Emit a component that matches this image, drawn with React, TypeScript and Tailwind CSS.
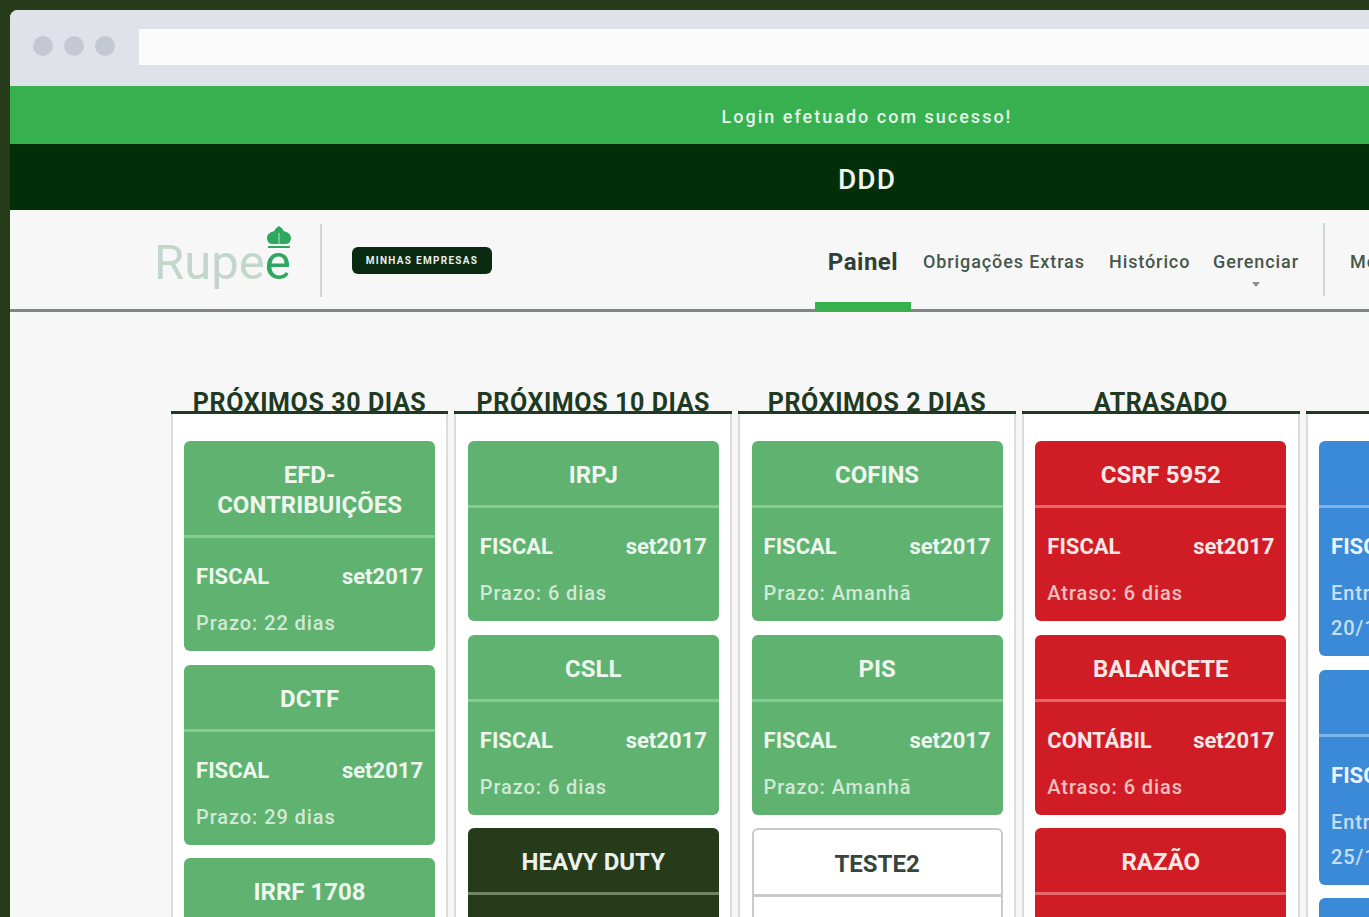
import React from "react";

type Tone = "green" | "red" | "blue" | "dark" | "white";

type Task = {
  title: string;
  dept: string;
  period: string;
  note: string;
};

const toneClasses: Record<Tone, { card: string; head: string }> = {
  green: { card: "bg-[#5fb270] text-[#edf7ee]", head: "border-[#85cb93]" },
  red: { card: "bg-[#d01c24] text-[#fbe6e6]", head: "border-[#e8676c]" },
  blue: { card: "bg-[#3a8ad8] text-[#eaf3fb]", head: "border-[#7fb4e8]" },
  dark: { card: "bg-[#263b19] text-[#eef0ea]", head: "border-[#6f8566]" },
  white: { card: "bg-white text-[#37463c] border-2 border-[#c9cbc9]", head: "border-[#c9cbc9]" },
};

const columns: { title: string; tone: Tone; tasks: (Task & { tone?: Tone })[] }[] = [
  {
    title: "PRÓXIMOS 30 DIAS",
    tone: "green",
    tasks: [
      { title: "EFD-CONTRIBUIÇÕES", dept: "FISCAL", period: "set2017", note: "Prazo: 22 dias" },
      { title: "DCTF", dept: "FISCAL", period: "set2017", note: "Prazo: 29 dias" },
      { title: "IRRF 1708", dept: "FISCAL", period: "set2017", note: "Prazo: 29 dias" },
    ],
  },
  {
    title: "PRÓXIMOS 10 DIAS",
    tone: "green",
    tasks: [
      { title: "IRPJ", dept: "FISCAL", period: "set2017", note: "Prazo: 6 dias" },
      { title: "CSLL", dept: "FISCAL", period: "set2017", note: "Prazo: 6 dias" },
      { title: "HEAVY DUTY", dept: "FISCAL", period: "set2017", note: "Prazo: 6 dias", tone: "dark" },
    ],
  },
  {
    title: "PRÓXIMOS 2 DIAS",
    tone: "green",
    tasks: [
      { title: "COFINS", dept: "FISCAL", period: "set2017", note: "Prazo: Amanhã" },
      { title: "PIS", dept: "FISCAL", period: "set2017", note: "Prazo: Amanhã" },
      { title: "TESTE2", dept: "FISCAL", period: "set2017", note: "Prazo: Amanhã", tone: "white" },
    ],
  },
  {
    title: "ATRASADO",
    tone: "red",
    tasks: [
      { title: "CSRF 5952", dept: "FISCAL", period: "set2017", note: "Atraso: 6 dias" },
      { title: "BALANCETE", dept: "CONTÁBIL", period: "set2017", note: "Atraso: 6 dias" },
      { title: "RAZÃO", dept: "CONTÁBIL", period: "set2017", note: "Atraso: 6 dias" },
    ],
  },
  {
    title: "ENTREGUE",
    tone: "blue",
    tasks: [
      { title: "ICMS", dept: "FISCAL", period: "set2017", note: "Entregue em: 20/10/2017" },
      { title: "ISS", dept: "FISCAL", period: "set2017", note: "Entregue em: 25/10/2017" },
      { title: "GPS", dept: "FISCAL", period: "set2017", note: "Entregue em: 25/10/2017" },
    ],
  },
];

function TaskCard({ task, tone }: { task: Task; tone: Tone }) {
  const styles = toneClasses[tone];
  return (
    <div className={`rounded-md overflow-hidden ${styles.card}`}>
      <div className={`px-3 pt-[19px] pb-[15px] text-center text-[24px] leading-[30px] font-bold border-b-[3px] ${styles.head}`}>
        {task.title}
      </div>
      <div className="px-3 pt-[27px] pb-[10px]">
        <div className="flex justify-between text-[22px] leading-[24px] font-bold">
          <span>{task.dept}</span>
          <span>{task.period}</span>
        </div>
        <div className="mt-[17px] text-[20px] leading-[35px] font-medium tracking-[0.900px] opacity-80 w-[190px]">
          {task.note}
        </div>
      </div>
    </div>
  );
}

function Logo() {
  return (
    <div className="flex items-baseline text-[49px] leading-none text-[#c3d6cc]">
      <span>Rupe</span>
      <span className="relative text-[#2fa85f]">
        e
        <svg viewBox="0 0 24 22" className="absolute -top-[12px] left-[2px] w-[24px] h-[22px]">
          {/* cloud badge over the last letter, split down the middle */}
          <path
            d="M12 0c2.500 1.500 4 3 4.800 5.200C20 5.600 24 8 24 12c0 3-2 6-5 6H5c-3 0-5-3-5-6 0-4 4-6.400 7.200-6.800C8 3 9.500 1.500 12 0z"
            fill="#2fa85f"
          />
          <path d="M12 7v11" stroke="#8fd0a6" strokeWidth="1.400" fill="none" />
          <rect x="1" y="20" width="22" height="2" fill="#2fa85f" />
        </svg>
      </span>
    </div>
  );
}

export default function App() {
  return (
    <div className="w-[1369px] h-[917px] overflow-hidden bg-[#263b19] pt-[10px] pl-[10px] font-['Roboto',sans-serif]">
      <div className="w-[1714px] h-[907px] rounded-tl-lg overflow-hidden bg-[#f7f7f7] flex flex-col">
        {/* Browser chrome */}
        <div className="h-[76px] shrink-0 bg-[#dfe2e8] flex items-start pt-[19px]">
          <div className="w-[129px] flex items-center gap-[11px] pl-[23px] pt-[7px]">
            <span className="w-[20px] h-[20px] rounded-full bg-[#c4c8d0]" />
            <span className="w-[20px] h-[20px] rounded-full bg-[#c4c8d0]" />
            <span className="w-[20px] h-[20px] rounded-full bg-[#c4c8d0]" />
          </div>
          <div className="flex-1 h-[36px] bg-[#fbfbfc]" />
        </div>

        {/* Flash message and company name */}
        <div className="h-[58px] shrink-0 bg-[#37b050] flex items-center justify-center pt-[3px] text-[#e6f5e8] text-[18px] font-medium tracking-[2px]">
          Login efetuado com sucesso!
        </div>
        <div className="h-[66px] shrink-0 bg-[#032f08] flex items-center justify-center pt-[5px] text-[#f0f3ee] text-[28px] font-medium tracking-[1px]">
          DDD
        </div>

        {/* Main nav */}
        <div className="h-[102px] shrink-0 border-b-[3px] border-[#7f8780] flex items-stretch pl-[144px]">
          <div className="w-[136px] flex items-center pt-[6px]">
            <Logo />
          </div>
          <div className="ml-[30px] mt-[14px] mb-[12px] w-[2px] bg-[#cfd6d0]" />
          <div className="ml-[30px] flex items-center pt-[2px]">
            <div className="w-[140px] h-[27px] rounded-md bg-[#0b2a12] text-[#e8efe8] text-[10px] font-bold tracking-[1.300px] flex items-center justify-center">
              MINHAS EMPRESAS
            </div>
          </div>
          <div className="ml-[323px] w-[96px] relative flex items-center justify-center text-[24px] font-bold tracking-[0.500px] text-[#2f4034] pt-[4px]">
            Painel
            <span className="absolute left-0 right-0 -bottom-[3px] h-[10px] bg-[#37b050]" />
          </div>
          <div className="flex items-center text-[18px] font-medium tracking-[0.900px] text-[#47574b] pt-[4px]">
            <span className="ml-[12px] w-[161px] whitespace-nowrap">Obrigações Extras</span>
            <span className="ml-[25px] w-[80px]">Histórico</span>
            <span className="ml-[24px] w-[87px] relative">
              Gerenciar
              <span className="absolute left-[39px] top-[34px] w-0 h-0 border-x-[4px] border-x-transparent border-t-[5px] border-t-[#8a938c]" />
            </span>
            <span className="ml-[23px] mb-[5px] w-[2px] h-[73px] bg-[#cfd6d0]" />
            <span className="ml-[25px] whitespace-nowrap">Meus dados</span>
          </div>
        </div>

        {/* Deadline board */}
        <div className="flex-1 flex gap-[6px] pl-[160.700px] pt-[78px] min-h-0">
          {columns.map((col) => (
            <div key={col.title} className="w-[277.750px] shrink-0 flex flex-col">
              <div className="h-[24px] border-b-[3px] border-[#1f3a22] text-center text-[25px] leading-[26px] font-bold tracking-[0.600px] text-[#1f3a22] whitespace-nowrap">
                {col.title}
              </div>
              <div className="flex-1 bg-white border-x-2 border-[#dcdedc] px-[11.400px] pt-[27px] flex flex-col gap-[13.500px]">
                {col.tasks.map((task) => (
                  <TaskCard key={task.title} task={task} tone={task.tone ?? col.tone} />
                ))}
              </div>
            </div>
          ))}
        </div>
      </div>
    </div>
  );
}
